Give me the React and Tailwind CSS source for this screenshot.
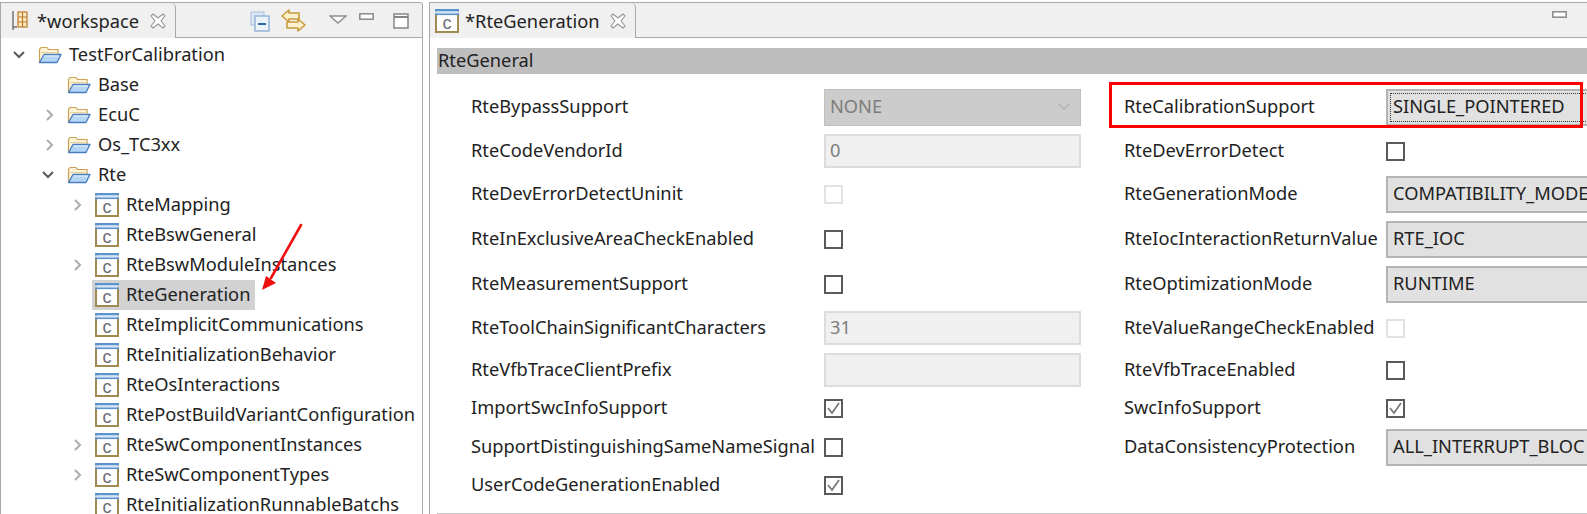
import React from "react";

const treeRows = [
  { name: "TestForCalibration", level: 0, kind: "folder", arrow: "open" },
  { name: "Base", level: 1, kind: "folder" },
  { name: "EcuC", level: 1, kind: "folder", arrow: "closed" },
  { name: "Os_TC3xx", level: 1, kind: "folder", arrow: "closed" },
  { name: "Rte", level: 1, kind: "folder", arrow: "open" },
  { name: "RteMapping", level: 2, kind: "container", arrow: "closed" },
  { name: "RteBswGeneral", level: 2, kind: "container" },
  { name: "RteBswModuleInstances", level: 2, kind: "container", arrow: "closed" },
  { name: "RteGeneration", level: 2, kind: "container", selected: true },
  { name: "RteImplicitCommunications", level: 2, kind: "container" },
  { name: "RteInitializationBehavior", level: 2, kind: "container" },
  { name: "RteOsInteractions", level: 2, kind: "container" },
  { name: "RtePostBuildVariantConfiguration", level: 2, kind: "container" },
  { name: "RteSwComponentInstances", level: 2, kind: "container", arrow: "closed" },
  { name: "RteSwComponentTypes", level: 2, kind: "container", arrow: "closed" },
  { name: "RteInitializationRunnableBatchs", level: 2, kind: "container" },
];

const levelPad = { 0: "w-[34px]", 1: "w-[63px]", 2: "w-[91px]" };

const formRows = [
  {
    h: "h-[44px]",
    left: { label: "RteBypassSupport", type: "disabledCombo", value: "NONE" },
    right: { label: "RteCalibrationSupport", type: "combo", value: "SINGLE_POINTERED", focus: true },
  },
  {
    h: "h-[44px]",
    left: { label: "RteCodeVendorId", type: "text", value: "0" },
    right: { label: "RteDevErrorDetect", type: "check" },
  },
  {
    h: "h-[42px]",
    left: { label: "RteDevErrorDetectUninit", type: "disabledCheck" },
    right: { label: "RteGenerationMode", type: "combo", value: "COMPATIBILITY_MODE" },
  },
  {
    h: "h-[48px]",
    left: { label: "RteInExclusiveAreaCheckEnabled", type: "check" },
    right: { label: "RteIocInteractionReturnValue", type: "combo", value: "RTE_IOC" },
  },
  {
    h: "h-[42px]",
    left: { label: "RteMeasurementSupport", type: "check" },
    right: { label: "RteOptimizationMode", type: "combo", value: "RUNTIME" },
  },
  {
    h: "h-[46px]",
    left: { label: "RteToolChainSignificantCharacters", type: "text", value: "31" },
    right: { label: "RteValueRangeCheckEnabled", type: "disabledCheck" },
  },
  {
    h: "h-[38px]",
    left: { label: "RteVfbTraceClientPrefix", type: "text", value: "" },
    right: { label: "RteVfbTraceEnabled", type: "check" },
  },
  {
    h: "h-[38px]",
    left: { label: "ImportSwcInfoSupport", type: "check", checked: true },
    right: { label: "SwcInfoSupport", type: "check", checked: true },
  },
  {
    h: "h-[40px]",
    left: { label: "SupportDistinguishingSameNameSignal", type: "check" },
    right: { label: "DataConsistencyProtection", type: "combo", value: "ALL_INTERRUPT_BLOC" },
  },
  {
    h: "h-[36px]",
    left: { label: "UserCodeGenerationEnabled", type: "check", checked: true },
  },
];

function FolderIcon() {
  return (
    <svg width="24" height="18" viewBox="0 0 24 18" className="shrink-0">
      <path d="M1.5 16V3.5L3 1.5h6l1.5 2h9.5v5" fill="#fdf3d6" stroke="#c9a257" strokeWidth="1.2" />
      <path d="M3 6.5h15" stroke="#e6cf9a" strokeWidth="1" />
      <path d="M1.5 16.5L6 8.5h17l-4 8z" fill="#b5d5f5" stroke="#4a7cc0" strokeWidth="1.3" strokeLinejoin="round" />
      <path d="M6.5 10h14.5" stroke="#e8f3fc" strokeWidth="1.2" />
    </svg>
  );
}

function ContainerIcon() {
  return (
    <svg width="24" height="24" viewBox="0 0 24 24" className="shrink-0">
      <rect x="1" y="1" width="22" height="22" fill="#ffffff" stroke="#a08a52" strokeWidth="2" />
      <rect x="0" y="0" width="24" height="2.5" fill="#5b93cf" />
      <rect x="0" y="2.5" width="24" height="2" fill="#d5e5f5" />
      <rect x="0" y="4.5" width="24" height="1.6" fill="#5b93cf" />
      <text x="12" y="20" textAnchor="middle" fontSize="18" fontFamily="Liberation Sans, sans-serif" fill="#6d6d78">
        c
      </text>
    </svg>
  );
}

function Chevron({ dir }) {
  if (dir === "open") {
    return (
      <svg width="12" height="8" viewBox="0 0 12 8" fill="none" stroke="#5a5a5a" strokeWidth="2">
        <path d="M1 1l5 5 5-5" />
      </svg>
    );
  }
  return (
    <svg width="8" height="12" viewBox="0 0 8 12" fill="none" stroke="#adadad" strokeWidth="2">
      <path d="M1 1l5 5-5 5" />
    </svg>
  );
}

function CloseIcon() {
  return (
    <svg width="16" height="16" viewBox="0 0 16 16" className="shrink-0">
      <path
        d="M1 3l2-2 5 4 5-4 2 2-4 5 4 5-2 2-5-4-5 4-2-2 4-5z"
        fill="#ffffff"
        stroke="#9a9a9a"
        strokeWidth="1.2"
        strokeLinejoin="round"
      />
    </svg>
  );
}

function WorkspaceIcon() {
  return (
    <svg width="16" height="19" viewBox="0 0 16 19" className="shrink-0">
      <path d="M1 0v19M1 16h4" stroke="#6d6d6d" strokeWidth="1.4" fill="none" />
      <rect x="6" y="1" width="9" height="15" fill="#fbe9c4" stroke="#bb7a26" strokeWidth="1.2" />
      <path d="M6 6h9M6 11h9M10.5 1v15" stroke="#bb7a26" strokeWidth="1.2" />
    </svg>
  );
}

function ViewToolbar() {
  return (
    <div className="flex items-start ml-auto pt-[6px]">
      <svg width="20" height="21" viewBox="0 0 20 21" className="mr-[11px] mt-[2px]">
        <rect x="1" y="1" width="13" height="13" fill="#dbe7f3" stroke="#a4bfdc" />
        <rect x="5" y="5" width="14" height="15" fill="#eaf2fa" stroke="#8fb0d3" strokeWidth="1.4" />
        <path d="M8 13h8" stroke="#2d6ba8" strokeWidth="2" />
      </svg>
      <svg width="25" height="23" viewBox="0 0 25 23" className="mr-[23px]">
        <path d="M1 7l7-6v3h10v6H8v3z" fill="#fdf2d0" stroke="#c99a3c" strokeWidth="1.6" strokeLinejoin="round" />
        <path d="M24 16l-7-6v3H6v6h11v3z" fill="#fdf2d0" stroke="#c99a3c" strokeWidth="1.6" strokeLinejoin="round" />
      </svg>
      <svg width="18" height="9" viewBox="0 0 18 9" className="mr-[12px] mt-[6px]">
        <path d="M1 1h16l-8 7z" fill="#ffffff" stroke="#8c8c8c" strokeWidth="1.4" />
      </svg>
      <MinimizeIcon />
      <svg width="16" height="16" viewBox="0 0 16 16" className="ml-[19px] mr-[13px] mt-[4px]">
        <rect x="1" y="1" width="14" height="14" fill="#ffffff" stroke="#858585" strokeWidth="1.5" />
        <path d="M1 4h14" stroke="#858585" strokeWidth="2" />
      </svg>
    </div>
  );
}

function MinimizeIcon() {
  return (
    <svg width="15" height="7" viewBox="0 0 15 7" className="mt-[4px]">
      <rect x="0.8" y="0.8" width="13.4" height="5.4" fill="#ffffff" stroke="#8a8a8a" strokeWidth="1.5" />
    </svg>
  );
}

function TreeRow({ row }) {
  return (
    <div className="flex items-center h-[30px]">
      <div className={`flex items-center justify-end shrink-0 h-full pr-[10px] ${levelPad[row.level]}`}>
        {row.arrow && <Chevron dir={row.arrow} />}
      </div>
      <div className={`flex items-center h-full pl-[3px] pr-[5px] gap-[7px] ${row.selected ? "bg-[#d2d2d2]" : ""}`}>
        {row.kind === "folder" ? <FolderIcon /> : <ContainerIcon />}
        <span className="whitespace-nowrap pb-[2px]">{row.name}</span>
      </div>
    </div>
  );
}

function Field({ field, labelWidth, controlWidth }) {
  if (!field) return null;
  return (
    <div className="flex items-center">
      <div className={`whitespace-nowrap pb-[2px] ${labelWidth}`}>{field.label}</div>
      <div className={`flex items-center ${controlWidth}`}>
        <Control field={field} />
      </div>
    </div>
  );
}

function Control({ field }) {
  if (field.type === "combo") {
    return (
      <div className="relative flex items-center w-full h-[37px] bg-[#e1e1e1] border-2 border-[#b4b4b4] pl-[5px] pb-[2px] whitespace-nowrap overflow-hidden">
        {field.focus && (
          <div className="absolute left-[2px] top-[2px] bottom-[2px] right-[8px] border border-dotted border-[#333333]" />
        )}
        {field.value}
      </div>
    );
  }
  if (field.type === "disabledCombo") {
    return (
      <div className="flex items-center justify-between w-full h-[37px] bg-[#cccccc] border border-[#bfbfbf] pl-[5px] pr-[10px] pb-[2px] text-[#7d7d7d]">
        {field.value}
        <svg width="12" height="7" viewBox="0 0 12 7" fill="none" stroke="#b0b0b0" strokeWidth="1.2">
          <path d="M1 1l5 5 5-5" />
        </svg>
      </div>
    );
  }
  if (field.type === "text") {
    return (
      <div className="flex items-center w-full h-[34px] bg-[#f0f0f0] border-2 border-[#dcdcdc] pl-[4px] pb-[2px] text-[#7d7d7d]">
        {field.value}
      </div>
    );
  }
  if (field.type === "disabledCheck") {
    return <div className="w-[19px] h-[19px] bg-white border-2 border-[#e2e2e2]" />;
  }
  return (
    <div className="flex items-center justify-center w-[19px] h-[19px] bg-white border-2 border-[#5a5a5a]">
      {field.checked && (
        <svg width="15" height="15" viewBox="0 0 15 15" fill="none" stroke="#7a7a7a" strokeWidth="1.8">
          <path d="M2 7l4 5 7-10" />
        </svg>
      )}
    </div>
  );
}

export default function App() {
  return (
    <div className="relative flex w-[1587px] h-[514px] overflow-hidden bg-white pt-[2px] text-[18.25px] leading-[18px] text-[#222222] font-['Noto_Sans',sans-serif]">
      {/* workspace view */}
      <aside className="w-[423px] shrink-0 border-x border-t border-[#a8a8a8] rounded-tr-[3px] overflow-hidden">
        <div className="flex h-[35px] bg-[#f0f0f0] border-b border-[#a8a8a8]">
          <div className="flex items-center w-[175px] h-[35px] bg-[#f0f0f0] border-r border-[#a8a8a8] rounded-tr-[5px] pl-[11px] gap-[9px]">
            <WorkspaceIcon />
            <span>*workspace</span>
            <span className="ml-[2px]">
              <CloseIcon />
            </span>
          </div>
          <ViewToolbar />
        </div>
        <div className="pt-[2px]">
          {treeRows.map((row) => (
            <TreeRow key={row.name} row={row} />
          ))}
        </div>
      </aside>

      {/* editor */}
      <main className="flex-1 min-w-0 ml-[6px] border-l border-t border-[#a8a8a8]">
        <div className="flex h-[35px] bg-[#f0f0f0] border-b border-[#a8a8a8]">
          <div className="flex items-center w-[206px] h-[35px] bg-[#f0f0f0] border-r border-[#a8a8a8] rounded-tr-[5px] pl-[5px] gap-[6px]">
            <ContainerIcon />
            <span>*RteGeneration</span>
            <span className="ml-[5px]">
              <CloseIcon />
            </span>
          </div>
          <div className="flex items-start ml-auto pt-[4px] pr-[20px]">
            <MinimizeIcon />
          </div>
        </div>
        <div className="pl-[7px] pt-[10px]">
          <div className="flex items-center h-[26px] bg-[#bebebe] pl-[1px] pb-[2px]">RteGeneral</div>
          <div className="pt-[11px] pl-[34px] border-b border-[#c8c8c8] pb-[10px]">
            {formRows.map((row) => (
              <div key={row.left.label} className={`flex items-center ${row.h}`}>
                <Field field={row.left} labelWidth="w-[353px]" controlWidth="w-[257px]" />
                <div className="ml-[43px]">
                  <Field field={row.right} labelWidth="w-[262px]" controlWidth="w-[260px]" />
                </div>
              </div>
            ))}
          </div>
        </div>
      </main>

      {/* annotations drawn over the screenshot */}
      <div className="absolute left-[1109px] top-[82px] w-[474px] h-[46px] border-[3px] border-[#ff0000]" />
      <svg className="absolute left-[255px] top-[220px]" width="55" height="75" viewBox="0 0 55 75">
        <path d="M46 5L16 58" stroke="#f01010" strokeWidth="2.6" strokeLinecap="round" />
        <path d="M7 70L11 56 21 63z" fill="#f01010" />
      </svg>
    </div>
  );
}
